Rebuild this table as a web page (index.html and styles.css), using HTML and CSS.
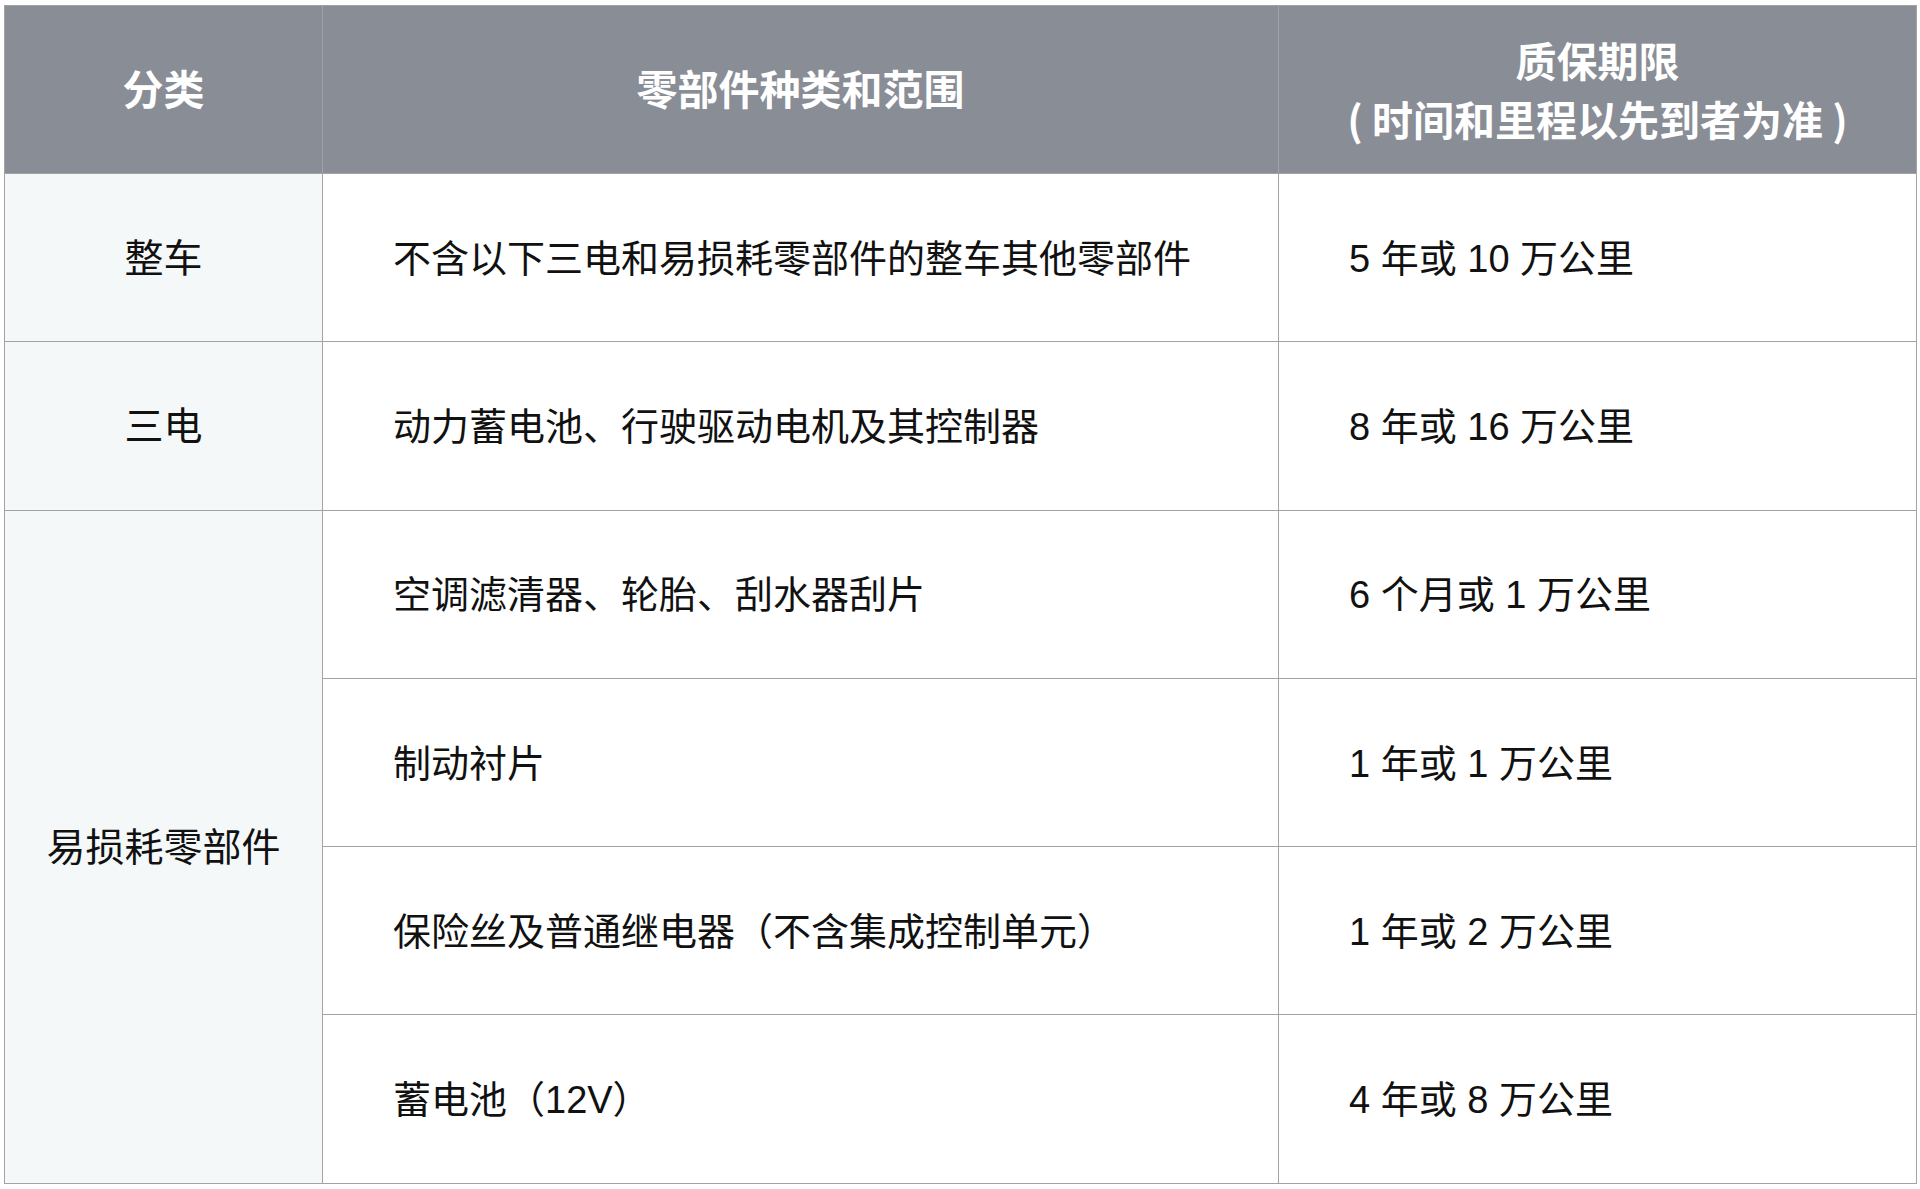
FILE: index.html
```html
<!DOCTYPE html>
<html lang="zh-CN">
<head>
<meta charset="utf-8">
<link rel="stylesheet" href="styles.css">
</head>
<body>
<div class="wrap">
<table class="warranty">
  <colgroup>
    <col class="c1"><col class="c2"><col class="c3">
  </colgroup>
  <thead>
    <tr>
      <th>分类</th>
      <th>零部件种类和范围</th>
      <th class="multi"><div>质保期限</div><div>( 时间和里程以先到者为准 )</div></th>
    </tr>
  </thead>
  <tbody>
    <tr>
      <td class="cat">整车</td>
      <td class="item">不含以下三电和易损耗零部件的整车其他零部件</td>
      <td class="term">5 年或 10 万公里</td>
    </tr>
    <tr>
      <td class="cat">三电</td>
      <td class="item">动力蓄电池、行驶驱动电机及其控制器</td>
      <td class="term">8 年或 16 万公里</td>
    </tr>
    <tr>
      <td class="cat" rowspan="4">易损耗零部件</td>
      <td class="item">空调滤清器、轮胎、刮水器刮片</td>
      <td class="term">6 个月或 1 万公里</td>
    </tr>
    <tr>
      <td class="item">制动衬片</td>
      <td class="term">1 年或 1 万公里</td>
    </tr>
    <tr>
      <td class="item">保险丝及普通继电器（不含集成控制单元）</td>
      <td class="term">1 年或 2 万公里</td>
    </tr>
    <tr>
      <td class="item">蓄电池（12V）</td>
      <td class="term">4 年或 8 万公里</td>
    </tr>
  </tbody>
</table>
</div>
</body>
</html>
```
FILE: styles.css
```css
html, body {
  margin: 0;
  padding: 0;
  background: #ffffff;
}
.wrap {
  padding: 5px 4px 0 4px;
}
.warranty {
  width: 1912px;
  border-collapse: collapse;
  table-layout: fixed;
  font-family: "Liberation Sans", "Noto Sans CJK SC", sans-serif;
  color: #111111;
  border: 1px solid #b4b4b4;
}
.c1 { width: 318px; }
.c2 { width: 956px; }
.c3 { width: 638px; }
.warranty th,
.warranty td {
  border: 1px solid #a3a3a3;
  padding: 0 0 5px 0;
  vertical-align: middle;
}
.warranty thead tr { height: 168px; }
.warranty tbody tr { height: 168.3px; }
.warranty th {
  background: #898d96;
  color: #ffffff;
  font-weight: 700;
  font-size: 41px;
  line-height: 59px;
  text-align: center;
  font-family: "Noto Sans CJK SC", sans-serif;
}
.warranty th.multi {
  padding-bottom: 1px;
}
.cat {
  background: #f5f8f9;
  text-align: center;
  font-size: 39px;
}
.item {
  padding-left: 70px !important;
  font-size: 38px;
}
.term {
  padding-left: 70px !important;
  font-size: 38px;
}
```
